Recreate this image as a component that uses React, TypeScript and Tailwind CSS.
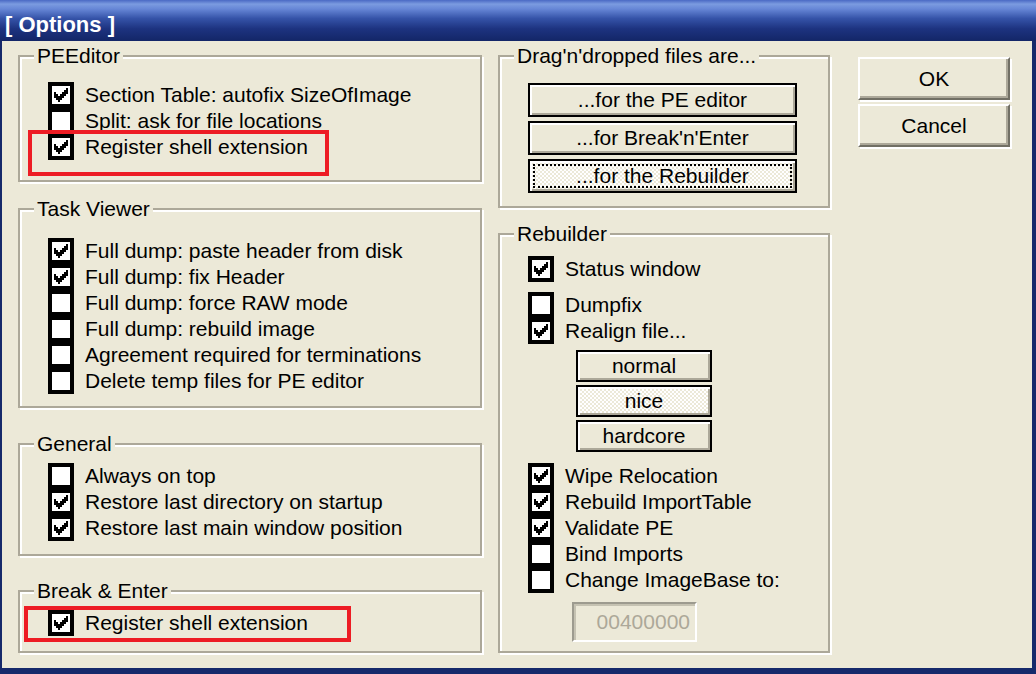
import React from "react";

const CheckMark = () => (
  <svg width="14" height="14" viewBox="0 0 7 7" shapeRendering="crispEdges">
    <path
      d="M6 0h1v1h-1z M5 1h2v1h-2z M0 2h1v1h-1z M4 2h3v1h-3z M0 3h2v1h-2z M3 3h3v1h-3z M0 4h5v1h-5z M1 5h3v1h-3z M2 6h1v1h-1z"
      fill="#000"
    />
  </svg>
);

const Box = ({ checked }: { checked: boolean }) => (
  <div className="w-[26px] h-[26px] border-4 border-black bg-white shrink-0 flex items-center justify-center">
    {checked && <CheckMark />}
  </div>
);

const Row = ({ checked, label }: { checked: boolean; label: string }) => (
  <div className="flex items-center h-[26px]">
    <Box checked={checked} />
    <span className="ml-[11px] leading-[26px] whitespace-nowrap">{label}</span>
  </div>
);

const Group = ({
  title,
  className,
  children,
}: {
  title: string;
  className: string;
  children?: React.ReactNode;
}) => (
  <div
    className={
      "relative border-2 border-[#aca899] shadow-[inset_2px_2px_0_#ffffff,2px_2px_0_#ffffff] " +
      className
    }
  >
    <span className="absolute left-[14px] top-[-14px] px-[3px] bg-[#ece9d8] leading-[26px] whitespace-nowrap">
      {title}
    </span>
    {children}
  </div>
);

const PushLike = ({
  label,
  checked,
  focus,
  className,
}: {
  label: string;
  checked?: boolean;
  focus?: boolean;
  className: string;
}) => (
  <div
    className={
      "relative border-2 border-black flex items-center justify-center shadow-[inset_2px_2px_0_#ffffff,inset_-2px_-2px_0_#aca899] " +
      (checked
        ? "bg-[repeating-conic-gradient(#ffffff_0%_25%,#ece9d8_0%_50%)] bg-[length:4px_4px] "
        : "bg-[#ece9d8] ") +
      className
    }
  >
    {focus && (
      <div className="absolute left-[3px] right-[3px] top-[3px] bottom-[3px] border-2 border-dotted border-black" />
    )}
    <span className="relative leading-[26px] whitespace-nowrap">{label}</span>
  </div>
);

const WinButton = ({ label }: { label: string }) => (
  <div className="w-[152px] h-[43px] flex items-center justify-center bg-[#ece9d8] border-t-2 border-l-2 border-t-[#ffffff] border-l-[#ffffff] border-r-2 border-b-2 border-r-[#716f64] border-b-[#716f64] shadow-[inset_-2px_-2px_0_#aca899,2px_2px_0_#ffffff]">
    <span className="leading-[26px]">{label}</span>
  </div>
);

export default function App() {
  return (
    <div className="w-[1036px] h-[674px] flex flex-col bg-[#16296b] font-['Liberation_Sans',Arial,sans-serif] text-[21px] leading-[26px] text-black overflow-hidden">
      <div className="h-[41px] shrink-0 bg-[linear-gradient(to_bottom,#4a69c4_0%,#7b9be0_10%,#6686d6_22%,#3553a8_45%,#1d3380_70%,#132667_100%)] pl-[5px] pt-[12px]">
        <span className="text-white font-bold text-[22px] leading-[26px] whitespace-nowrap">[ Options ]</span>
      </div>
      <div className="flex-1 ml-[2px] mr-[4px] mb-[6px] bg-[#ece9d8] flex pl-[16px] pt-[14px]">
        {/* Left column */}
        <div className="w-[466px] flex flex-col">
          <Group title="PEEditor" className="w-[464px] h-[127px] pt-[25px] pl-[28px]">
            <Row checked label="Section Table: autofix SizeOfImage" />
            <Row checked={false} label="Split: ask for file locations" />
            <Row checked label="Register shell extension" />
            <div className="absolute left-[8px] top-[73px] w-[301px] h-[46px] border-4 border-[#ed1c24]" />
          </Group>
          <Group title="Task Viewer" className="w-[464px] h-[200px] mt-[26px] pt-[28px] pl-[28px]">
            <Row checked label="Full dump: paste header from disk" />
            <Row checked label="Full dump: fix Header" />
            <Row checked={false} label="Full dump: force RAW mode" />
            <Row checked={false} label="Full dump: rebuild image" />
            <Row checked={false} label="Agreement required for terminations" />
            <Row checked={false} label="Delete temp files for PE editor" />
          </Group>
          <Group title="General" className="w-[464px] h-[113px] mt-[35px] pt-[18px] pl-[28px]">
            <Row checked={false} label="Always on top" />
            <Row checked label="Restore last directory on startup" />
            <Row checked label="Restore last main window position" />
          </Group>
          <Group title="Break & Enter" className="w-[464px] h-[63px] mt-[34px] pt-[18px] pl-[28px]">
            <Row checked label="Register shell extension" />
            <div className="absolute left-[4px] top-[14px] w-[327px] h-[36px] border-4 border-[#ed1c24]" />
          </Group>
        </div>

        {/* Middle column */}
        <div className="w-[334px] ml-[14px] flex flex-col">
          <Group title="Drag'n'dropped files are..." className="w-[332px] h-[153px] pt-[26px] pl-[28px]">
            <div className="flex flex-col gap-[4px]">
              <PushLike label="...for the PE editor" className="w-[269px] h-[34px]" />
              <PushLike label="...for Break'n'Enter" className="w-[269px] h-[34px]" />
              <PushLike label="...for the Rebuilder" checked focus className="w-[269px] h-[34px]" />
            </div>
          </Group>
          <Group title="Rebuilder" className="w-[332px] h-[420px] mt-[25px] pt-[21px] pl-[28px]">
            <Row checked label="Status window" />
            <div className="mt-[10px]">
              <Row checked={false} label="Dumpfix" />
              <Row checked label="Realign file..." />
            </div>
            <div className="mt-[6px] ml-[48px] flex flex-col gap-[3px]">
              <PushLike label="normal" className="w-[136px] h-[32px]" />
              <PushLike label="nice" checked className="w-[136px] h-[32px]" />
              <PushLike label="hardcore" className="w-[136px] h-[32px]" />
            </div>
            <div className="mt-[11px]">
              <Row checked label="Wipe Relocation" />
              <Row checked label="Rebuild ImportTable" />
              <Row checked label="Validate PE" />
              <Row checked={false} label="Bind Imports" />
              <Row checked={false} label="Change ImageBase to:" />
            </div>
            <div className="mt-[9px] ml-[44px] w-[125px] h-[40px] flex items-center justify-end pr-[5px] bg-[#ece9d8] border-t-2 border-l-2 border-t-[#9d9b8f] border-l-[#9d9b8f] border-b-2 border-r-2 border-b-[#ffffff] border-r-[#ffffff] shadow-[inset_2px_2px_0_#c5c2b2]">
              <span className="text-[#aca899] leading-[26px]">00400000</span>
            </div>
          </Group>
        </div>

        {/* Right column */}
        <div className="ml-[26px] mt-[2px] flex flex-col gap-[4px]">
          <WinButton label="OK" />
          <WinButton label="Cancel" />
        </div>
      </div>
    </div>
  );
}
